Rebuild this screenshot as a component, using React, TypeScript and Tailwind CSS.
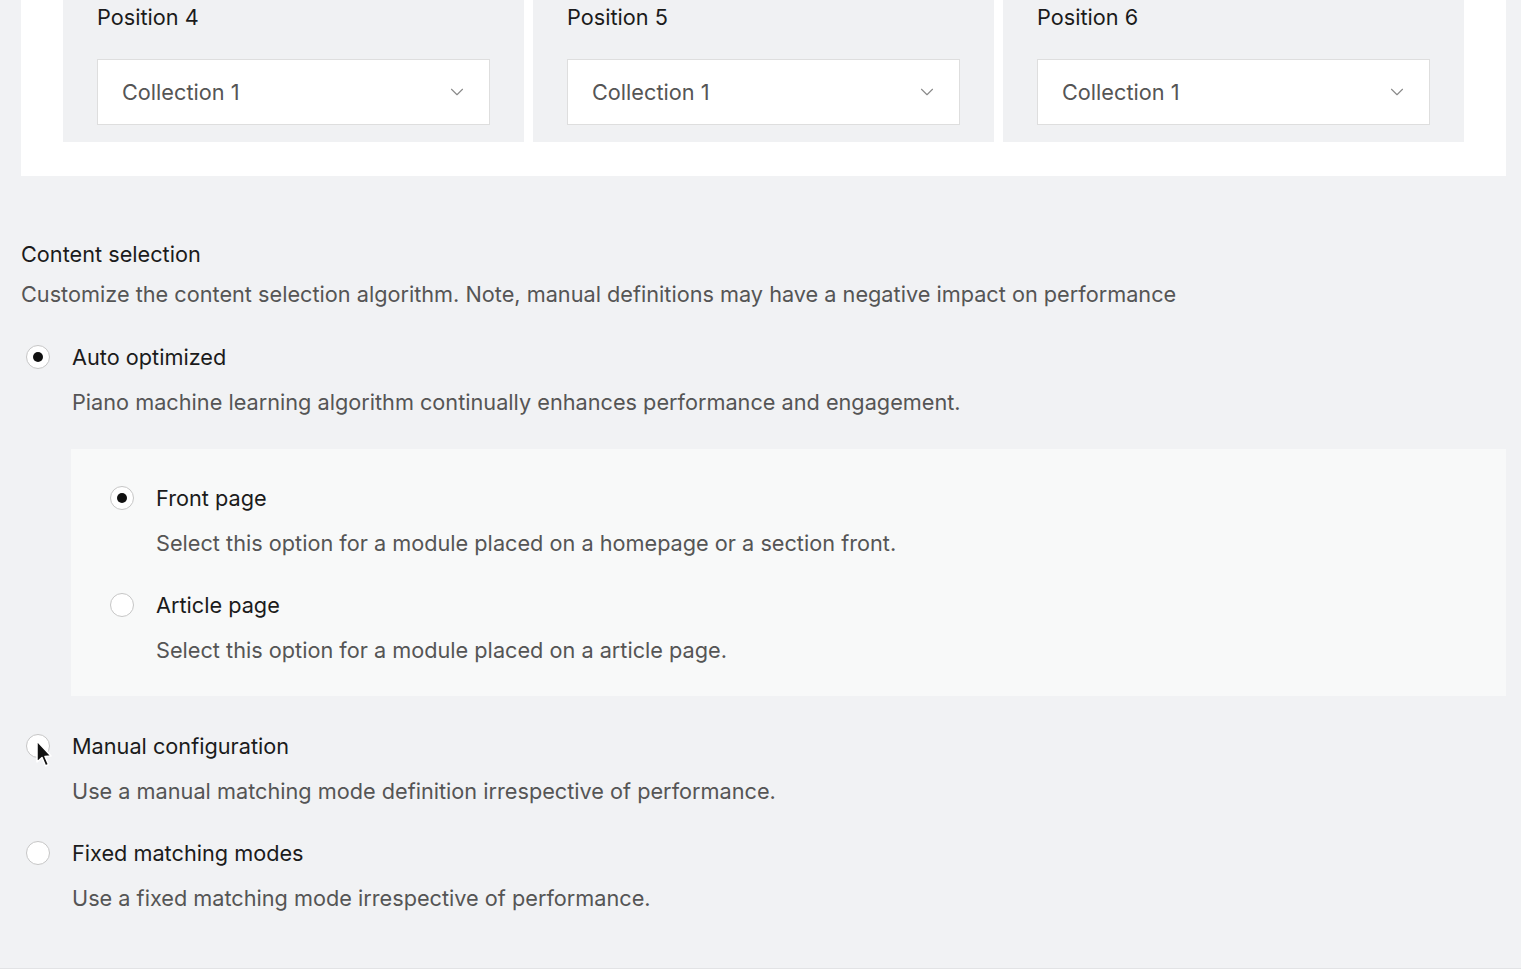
import { ChevronDown } from "lucide-react";

type Opt = { title: string; desc: string; checked?: boolean };

function Radio({ checked }: { checked?: boolean }) {
  return (
    <span className="flex h-6 w-6 shrink-0 items-center justify-center rounded-full border border-[#c6c6c6] bg-white">
      {checked && <span className="h-[10px] w-[10px] rounded-full bg-[#111]" />}
    </span>
  );
}

function RadioRow({ opt }: { opt: Opt }) {
  return (
    <div>
      <div className="flex h-[30px] items-center gap-[22px]">
        <Radio checked={opt.checked} />
        <span className="text-[21.7px] text-[#1b1b1b]">{opt.title}</span>
      </div>
      <p className="mt-[15px] pl-[46px] text-[21.7px] leading-[30px] text-[#555]">{opt.desc}</p>
    </div>
  );
}

function PositionPanel({ n }: { n: number }) {
  return (
    <div className="flex-1 bg-[#f0f1f3] px-[34px] pb-[17px]">
      <div className="h-[34px] text-[21.7px] leading-[34px] text-[#1b1b1b]">Position {n}</div>
      <div className="mt-[25px] flex h-[66px] items-center justify-between border border-[#dedede] bg-white pl-[24px] pr-[21px]">
        <span className="text-[21.7px] text-[#555]">Collection 1</span>
        <ChevronDown className="h-[22px] w-[22px] text-[#8a8a8a]" strokeWidth={1.2} />
      </div>
    </div>
  );
}

export default function App() {
  return (
    <div
      className="min-h-[969px] bg-[#f1f2f4] pl-[21px] pr-[15px]"
      style={{ fontFamily: "Inter, 'Noto Sans', sans-serif" }}
    >
      {/* Positions card */}
      <div className="bg-white px-[42px] pb-[34px]">
        <div className="flex gap-[9px]">
          <PositionPanel n={4} />
          <PositionPanel n={5} />
          <PositionPanel n={6} />
        </div>
      </div>

      {/* Content selection */}
      <div className="mt-[63px]">
        <h2 className="text-[21.7px] leading-[30px] text-[#1b1b1b]">Content selection</h2>
        <p className="mt-[10px] text-[21.7px] leading-[30px] text-[#555]">
          Customize the content selection algorithm. Note, manual definitions may have a negative impact on performance
        </p>

        <div className="mt-[33px] pl-[5px]">
          <RadioRow opt={{ title: "Auto optimized", desc: "Piano machine learning algorithm continually enhances performance and engagement.", checked: true }} />
        </div>

        <div className="ml-[50px] mt-[32px] bg-[#f8f9f9] pb-[31px] pl-[39px] pt-[34px]">
          <RadioRow opt={{ title: "Front page", desc: "Select this option for a module placed on a homepage or a section front.", checked: true }} />
          <div className="mt-[32px]">
            <RadioRow opt={{ title: "Article page", desc: "Select this option for a module placed on a article page." }} />
          </div>
        </div>

        <div className="relative mt-[35px] pl-[5px]">
          <RadioRow opt={{ title: "Manual configuration", desc: "Use a manual matching mode definition irrespective of performance." }} />
          <svg className="absolute left-[14px] top-[8px]" width="18" height="30" viewBox="0 0 18 30">
            <path d="M2 2 L2 23 L7 18.5 L10.5 27 L13.5 25.5 L10 17.5 L16 17 Z" fill="#111" stroke="#fff" strokeWidth="1.5" strokeLinejoin="round" />
          </svg>
        </div>

        <div className="mt-[32px] pl-[5px]">
          <RadioRow opt={{ title: "Fixed matching modes", desc: "Use a fixed matching mode irrespective of performance." }} />
        </div>
      </div>
      <div className="-ml-[21px] -mr-[15px] mt-[55px] border-b-2 border-[#e2e3e5]" />
    </div>
  );
}
